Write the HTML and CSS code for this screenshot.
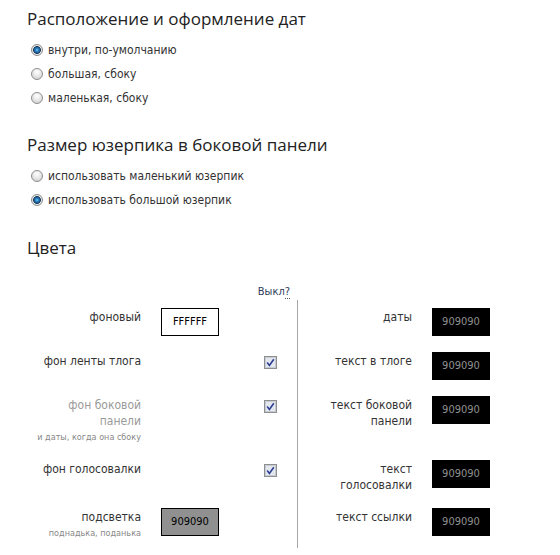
FILE: index.html
```html
<!DOCTYPE html>
<html lang="ru">
<head>
<meta charset="utf-8">
<link rel="stylesheet" href="styles.css">
</head>
<body>
<div class="page">
  <h2 class="title">Расположение и оформление дат</h2>
  <ul class="options">
    <li><label class="opt"><input type="radio" name="dates" class="radio" checked>внутри, по-умолчанию</label></li>
    <li><label class="opt"><input type="radio" name="dates" class="radio">большая, сбоку</label></li>
    <li><label class="opt"><input type="radio" name="dates" class="radio">маленькая, сбоку</label></li>
  </ul>

  <h2 class="title title-2">Размер юзерпика в боковой панели</h2>
  <ul class="options options-2">
    <li><label class="opt"><input type="radio" name="up" class="radio">использовать маленький юзерпик</label></li>
    <li><label class="opt"><input type="radio" name="up" class="radio" checked>использовать большой юзерпик</label></li>
  </ul>

  <h2 class="title title-3">Цвета</h2>

  <div class="off-head"><span>Выкл<span class="hint">?</span></span></div>
  <div class="colors">
    <div class="divider"></div>

    <div class="lbl">фоновый</div>
    <div class="ctl"><span class="swatch sw-white">FFFFFF</span></div>
    <div class="lbl lbl-r">даты</div>
    <div class="ctl ctl-r"><span class="swatch sw-black">909090</span></div>

    <div class="lbl">фон ленты тлога</div>
    <div class="ctl ctl-check"><svg class="check" width="13" height="13" viewBox="0 0 13 13"><rect x="0.5" y="0.5" width="12" height="12" fill="#fff" stroke="#8e8f8f"/><rect x="1.5" y="1.5" width="10" height="10" fill="#e4e7ee" stroke="#c6cbd4"/><path d="M3.2 6.6 L5.4 9.4 L9.8 3.2" fill="none" stroke="#2a3d93" stroke-width="1.6"/></svg></div>
    <div class="lbl lbl-r">текст в тлоге</div>
    <div class="ctl ctl-r"><span class="swatch sw-black">909090</span></div>

    <div class="lbl lbl-muted">фон боковой<br>панели<small class="note">и даты, когда она сбоку</small></div>
    <div class="ctl ctl-check"><svg class="check" width="13" height="13" viewBox="0 0 13 13"><rect x="0.5" y="0.5" width="12" height="12" fill="#fff" stroke="#8e8f8f"/><rect x="1.5" y="1.5" width="10" height="10" fill="#e4e7ee" stroke="#c6cbd4"/><path d="M3.2 6.6 L5.4 9.4 L9.8 3.2" fill="none" stroke="#2a3d93" stroke-width="1.6"/></svg></div>
    <div class="lbl lbl-r">текст боковой<br>панели</div>
    <div class="ctl ctl-r"><span class="swatch sw-black">909090</span></div>

    <div class="lbl">фон голосовалки</div>
    <div class="ctl ctl-check"><svg class="check" width="13" height="13" viewBox="0 0 13 13"><rect x="0.5" y="0.5" width="12" height="12" fill="#fff" stroke="#8e8f8f"/><rect x="1.5" y="1.5" width="10" height="10" fill="#e4e7ee" stroke="#c6cbd4"/><path d="M3.2 6.6 L5.4 9.4 L9.8 3.2" fill="none" stroke="#2a3d93" stroke-width="1.6"/></svg></div>
    <div class="lbl lbl-r">текст<br>голосовалки</div>
    <div class="ctl ctl-r"><span class="swatch sw-black">909090</span></div>

    <div class="lbl">подсветка<small class="note">поднадька, поданька</small></div>
    <div class="ctl"><span class="swatch sw-gray">909090</span></div>
    <div class="lbl lbl-r">текст ссылки</div>
    <div class="ctl ctl-r"><span class="swatch sw-black">909090</span></div>
  </div>
</div>
</body>
</html>
```

FILE: styles.css
```css
html, body {
  margin: 0;
  padding: 0;
  background: #fff;
}

.page {
  padding-left: 27px;
  font-family: "DejaVu Sans Condensed", "DejaVu Sans", "Liberation Sans", sans-serif;
  font-size: 12px;
  color: #333;
}

.title {
  margin: 7px 0 0;
  font-family: "Open Sans", "Liberation Sans", sans-serif;
  font-weight: 400;
  font-size: 17px;
  line-height: 24px;
  color: #222;
}

.title-2 { margin-top: 23px; }
.title-3 { margin-top: 24px; }

.options {
  list-style: none;
  margin: 7px 0 0;
  padding: 0;
}

.options-2 { margin-top: 7px; }

.options li {
  height: 24px;
  display: flex;
  align-items: center;
}

.opt {
  display: flex;
  align-items: center;
  line-height: 16px;
}

.radio {
  appearance: none;
  -webkit-appearance: none;
  width: 12px;
  height: 12px;
  margin: 0 5px 0 4px;
  border-radius: 50%;
  border: 1px solid #8d8d8d;
  background: radial-gradient(circle at 50% 30%, #ffffff 0, #eeeeee 35%, #cbcbcb 100%);
  box-sizing: border-box;
}

.radio:checked {
  background: radial-gradient(circle at 50% 50%, #7cc8f2 0, #2d84c4 1.5px, #17558c 3px, #203a55 3.6px, #eaeaea 4.2px, #d2d2d2 100%);
}

.off-head {
  width: 263px;
  margin-top: 24px;
  text-align: right;
  font-size: 11px;
  line-height: 16px;
  color: #2f3c5c;
}

.hint {
  border-bottom: 1px dotted #555;
}

.colors {
  display: grid;
  grid-template-columns: 114px 156px 1px 114px 1fr;
  grid-template-rows: 44px 44px 64px 48px 48px;
}

.divider {
  grid-column: 3;
  grid-row: 1 / -1;
  background: #a8a8a8;
}

.lbl {
  grid-column: 1;
  text-align: right;
  padding-top: 9px;
  font-size: 12px;
  line-height: 16px;
  color: #333;
}

.lbl-r { grid-column: 4; }

.lbl-muted { color: #9a9a9a; }

.note {
  display: block;
  margin-top: 1px;
  font-size: 9px;
  line-height: 14px;
  color: #888;
}

.ctl {
  grid-column: 2;
  padding: 8px 0 0 20px;
}

.ctl-r { grid-column: 5; }

.ctl-check {
  display: flex;
  justify-content: flex-end;
  padding: 12px 20px 0 0;
}

.check { display: block; }

.swatch {
  display: block;
  box-sizing: border-box;
  width: 58px;
  height: 28px;
  line-height: 26px;
  text-align: center;
  font-size: 11px;
  border: 1px solid #000;
}

.sw-white { background: #fff; color: #000; }
.sw-gray { background: #909090; color: #000; }
.sw-black { background: #000; color: #909090; }
```
